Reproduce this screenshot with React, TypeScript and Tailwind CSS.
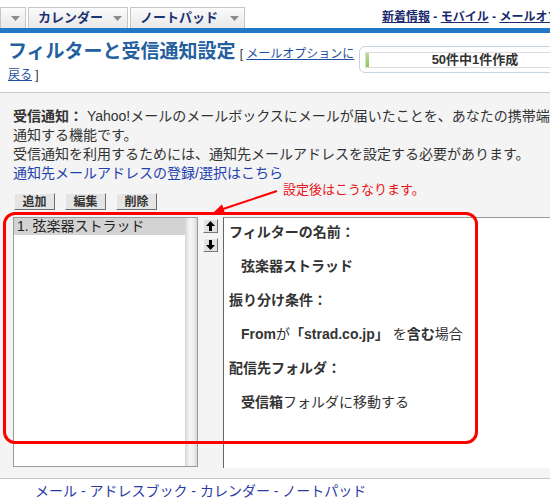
import React from "react";

const Caret = () => (
  <svg width="9" height="5" viewBox="0 0 9 5" className="shrink-0">
    <path d="M0 0H9L4.5 5Z" fill="#8c8c8c" />
  </svg>
);

function Tab({ label, width }: { label?: string; width: string }) {
  return (
    <div
      className={`${width} h-[21px] flex items-center justify-between border border-b-0 border-[#c6c6c6] bg-[linear-gradient(#fbfbfb,#e8e8e8)] pl-[9px] pr-[5px]`}
    >
      <span className="text-[13px] leading-[16px] font-bold text-[#1d3474]">{label}</span>
      <Caret />
    </div>
  );
}

function Btn({ label }: { label: string }) {
  return (
    <div className="w-[41px] h-[17px] flex items-center justify-center bg-[#e4e4e4] border border-t-[#f4f4f4] border-l-[#f4f4f4] border-r-[#6e6e6e] border-b-[#6e6e6e] text-[12px] leading-[14px] font-bold text-[#333]">
      {label}
    </div>
  );
}

function ArrowBtn({ up }: { up?: boolean }) {
  return (
    <div className="w-[15px] h-[14px] flex items-center justify-center bg-[#e2e2e2] border border-t-[#f6f6f6] border-l-[#f6f6f6] border-r-[#777] border-b-[#777]">
      <svg width="9" height="10" viewBox="0 0 9 10">
        {up ? (
          <path d="M4.5 0L9 5H6V10H3V5H0Z" fill="#000" />
        ) : (
          <path d="M4.5 10L9 5H6V0H3V5H0Z" fill="#000" />
        )}
      </svg>
    </div>
  );
}

export default function App() {
  return (
    <div className="relative w-[550px] h-[500px] overflow-hidden bg-white font-['Liberation_Sans','Noto_Sans_CJK_JP',sans-serif] text-[#333]">
      <div className="w-[760px]">
        {/* nav */}
        <div className="flex items-end h-[28px]">
          <div className="flex items-end gap-[2px]">
            <Tab width="w-[26px]" />
            <Tab width="w-[100px]" label="カレンダー" />
            <Tab width="w-[115px]" label="ノートパッド" />
          </div>
          <div className="self-start mt-[9px] ml-[137px] text-[12px] leading-[16px] font-bold text-[#1b2a6e] whitespace-nowrap">
            <span className="underline">新着情報</span>
            <span> - </span>
            <span className="underline">モバイル</span>
            <span> - </span>
            <span className="underline">メールオプション</span>
          </div>
        </div>
        <div className="h-[5px] bg-[#2178c7]" />

        {/* header */}
        <div className="h-[59px] flex items-start">
          <div className="w-[351px] pl-[8px] pt-[7px]">
            <div className="flex items-baseline whitespace-nowrap">
              <span className="text-[19px] leading-[24px] font-bold text-[#245f9f]">フィルターと受信通知設定</span>
              <span className="text-[12px] leading-[16px] ml-[4px] text-[#333]">[&nbsp;</span>
              <span className="text-[12px] leading-[16px] text-[#1f4fa0] underline">メールオプションに</span>
            </div>
            <div className="mt-[2px] text-[12px] leading-[18px] whitespace-nowrap">
              <span className="text-[#1f4fa0] underline">戻る</span>
              <span> ]</span>
            </div>
          </div>
          <div className="ml-[8px] mt-[13px] w-[232px] h-[27px] rounded-[6px] border border-[#c6d3e5] bg-white px-[5px] pt-[5px]">
            <div className="relative h-[16px] border border-[#dcdcdc] bg-white flex items-center justify-center">
              <div className="absolute left-0 top-0 bottom-0 w-[3px] bg-[linear-gradient(#b9df8c,#8ec45a)]" />
              <span className="text-[13px] leading-[14px] font-bold text-[#333]">50件中1件作成</span>
            </div>
          </div>
        </div>

        {/* gray section */}
        <div className="h-[387px] border-t border-b border-[#c8c8c8] bg-[#f4f4f4] pl-[13px] pt-[14px]">
          <div className="text-[14px] leading-[19px] whitespace-nowrap">
            <div>
              <span className="font-bold">受信通知：</span> Yahoo!メールのメールボックスにメールが届いたことを、あなたの携帯端末にメールで
            </div>
            <div>通知する機能です。</div>
            <div>受信通知を利用するためには、通知先メールアドレスを設定する必要があります。</div>
            <div className="text-[#1e3fae]">通知先メールアドレスの登録/選択はこちら</div>
          </div>

          <div className="flex gap-[10px] mt-[10px] ml-[1px]">
            <Btn label="追加" />
            <Btn label="編集" />
            <Btn label="削除" />
          </div>

          <div className="flex mt-[7px] h-[250px]">
            <div className="w-[185px] h-full border border-[#9a9a9a] bg-white flex">
              <div className="flex-1">
                <div className="h-[17px] bg-[#d3d3d3] pl-[3px] text-[14px] leading-[17px] text-[#222] whitespace-nowrap">
                  1. 弦楽器ストラッド
                </div>
              </div>
              <div className="w-[12px] h-full bg-[linear-gradient(to_right,#d6d6d6,#f6f6f6_40%,#eeeeee_70%,#d9d9d9)]" />
            </div>
            <div className="ml-[5px] pt-[2px] flex flex-col gap-[5px]">
              <ArrowBtn up />
              <ArrowBtn />
            </div>
            <div className="ml-[5px] flex-1 h-[251px] border-l border-t border-l-[#666] border-t-[#999] bg-white pl-[5px] text-[14px] font-bold text-[#333] whitespace-nowrap">
              <div className="-mt-[3px]">
                <div className="h-[34px] flex items-center">フィルターの名前：</div>
                <div className="h-[34px] flex items-center pl-[12px]">弦楽器ストラッド</div>
                <div className="h-[34px] flex items-center">振り分け条件：</div>
                <div className="h-[34px] flex items-center pl-[12px]">
                  From<span className="font-normal">が</span>「strad.co.jp」 <span className="font-normal">&nbsp;を</span>含む<span className="font-normal">場合</span>
                </div>
                <div className="h-[34px] flex items-center">配信先フォルダ：</div>
                <div className="h-[34px] flex items-center pl-[12px]">
                  受信箱<span className="font-normal">フォルダに移動する</span>
                </div>
              </div>
            </div>
          </div>
        </div>

        {/* footer */}
        <div className="pl-[35px] pt-[2px] text-[14px] leading-[20px] text-[#2a3aa6] whitespace-nowrap">
          <span>メール</span>
          <span> - </span>
          <span>アドレスブック</span>
          <span> - </span>
          <span>カレンダー</span>
          <span> - </span>
          <span>ノートパッド</span>
        </div>
      </div>

      {/* annotation overlays */}
      <div className="absolute left-[283px] top-[182px] text-[13px] leading-[16px] text-[#e8141b] whitespace-nowrap">
        設定後はこうなります。
      </div>
      <div className="absolute left-[3px] top-[212px] w-[475px] h-[232px] border-[3px] border-[#ff0000] rounded-[12px] pointer-events-none" />
      <svg className="absolute left-0 top-0 pointer-events-none" width="550" height="500" viewBox="0 0 550 500">
        <line x1="277" y1="191" x2="223" y2="209" stroke="#ff0000" strokeWidth="2" />
        <polygon points="214,212 225,213.3 222,204.3" fill="#ff0000" />
      </svg>
    </div>
  );
}
